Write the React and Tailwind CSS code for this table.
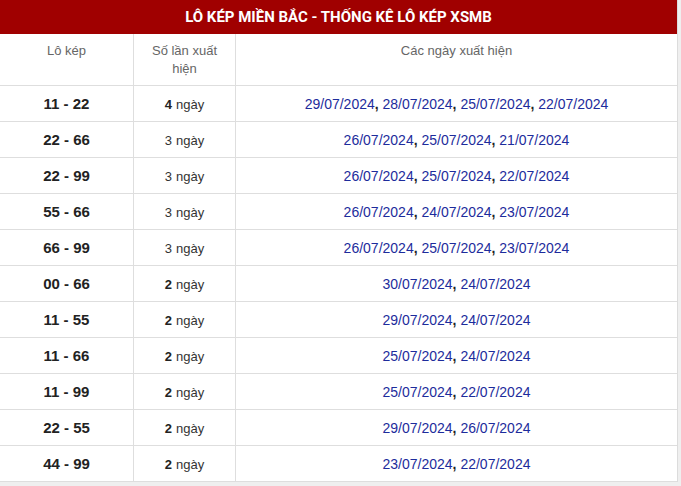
import React from "react";

const rows = [
  ["11 - 22", 4, ["29/07/2024", "28/07/2024", "25/07/2024", "22/07/2024"]],
  ["22 - 66", 3, ["26/07/2024", "25/07/2024", "21/07/2024"]],
  ["22 - 99", 3, ["26/07/2024", "25/07/2024", "22/07/2024"]],
  ["55 - 66", 3, ["26/07/2024", "24/07/2024", "23/07/2024"]],
  ["66 - 99", 3, ["26/07/2024", "25/07/2024", "23/07/2024"]],
  ["00 - 66", 2, ["30/07/2024", "24/07/2024"]],
  ["11 - 55", 2, ["29/07/2024", "24/07/2024"]],
  ["11 - 66", 2, ["25/07/2024", "24/07/2024"]],
  ["11 - 99", 2, ["25/07/2024", "22/07/2024"]],
  ["22 - 55", 2, ["29/07/2024", "26/07/2024"]],
  ["44 - 99", 2, ["23/07/2024", "22/07/2024"]],
];

const App = () => {
  return (
    <div className="h-[486px] w-[681px] overflow-hidden bg-[#efefef] font-['Liberation_Sans',Arial,sans-serif]">
      <div className="w-[678px] border-r border-[#dcdcdc] bg-white">
        <div className="flex h-[34px] items-center justify-center bg-[#a00000] font-['Roboto',sans-serif] text-[15px] font-bold text-white">
          LÔ KÉP MIỀN BẮC - THỐNG KÊ LÔ KÉP XSMB
        </div>
        <div className="grid h-[52px] grid-cols-[134px_102px_1fr] border-b border-[#dedede] text-center text-[13px] leading-[18px] text-[#666]">
          <div className="border-r border-[#dedede] px-2 pt-2">Lô kép</div>
          <div className="border-r border-[#dedede] px-2 pt-2">Số lần xuất hiện</div>
          <div className="px-2 pt-2">Các ngày xuất hiện</div>
        </div>
        {rows.map(([pair, count, dates]) => (
          <div
            key={pair}
            className="grid h-[36px] grid-cols-[134px_102px_1fr] border-b border-[#dedede] text-center"
          >
            <div className="flex items-center justify-center border-r border-[#dedede] pt-[2px] text-[15px] font-bold text-[#222]">
              {pair}
            </div>
            <div className="flex items-center justify-center gap-1 border-r border-[#dedede] pt-[2px] text-[13px] text-[#333]">
              <span className={count === 3 ? "text-[#333]" : "font-bold text-[#222]"}>{count}</span>
              <span>ngày</span>
            </div>
            <div className="flex items-center justify-center pt-[2px] text-[14px] text-[#1d2c9c]">
              {dates.map((d, i) => (
                <React.Fragment key={d}>
                  {i > 0 && <span className="whitespace-pre font-bold text-[#222]">, </span>}
                  <span>{d}</span>
                </React.Fragment>
              ))}
            </div>
          </div>
        ))}
      </div>
    </div>
  );
};

export default App;
